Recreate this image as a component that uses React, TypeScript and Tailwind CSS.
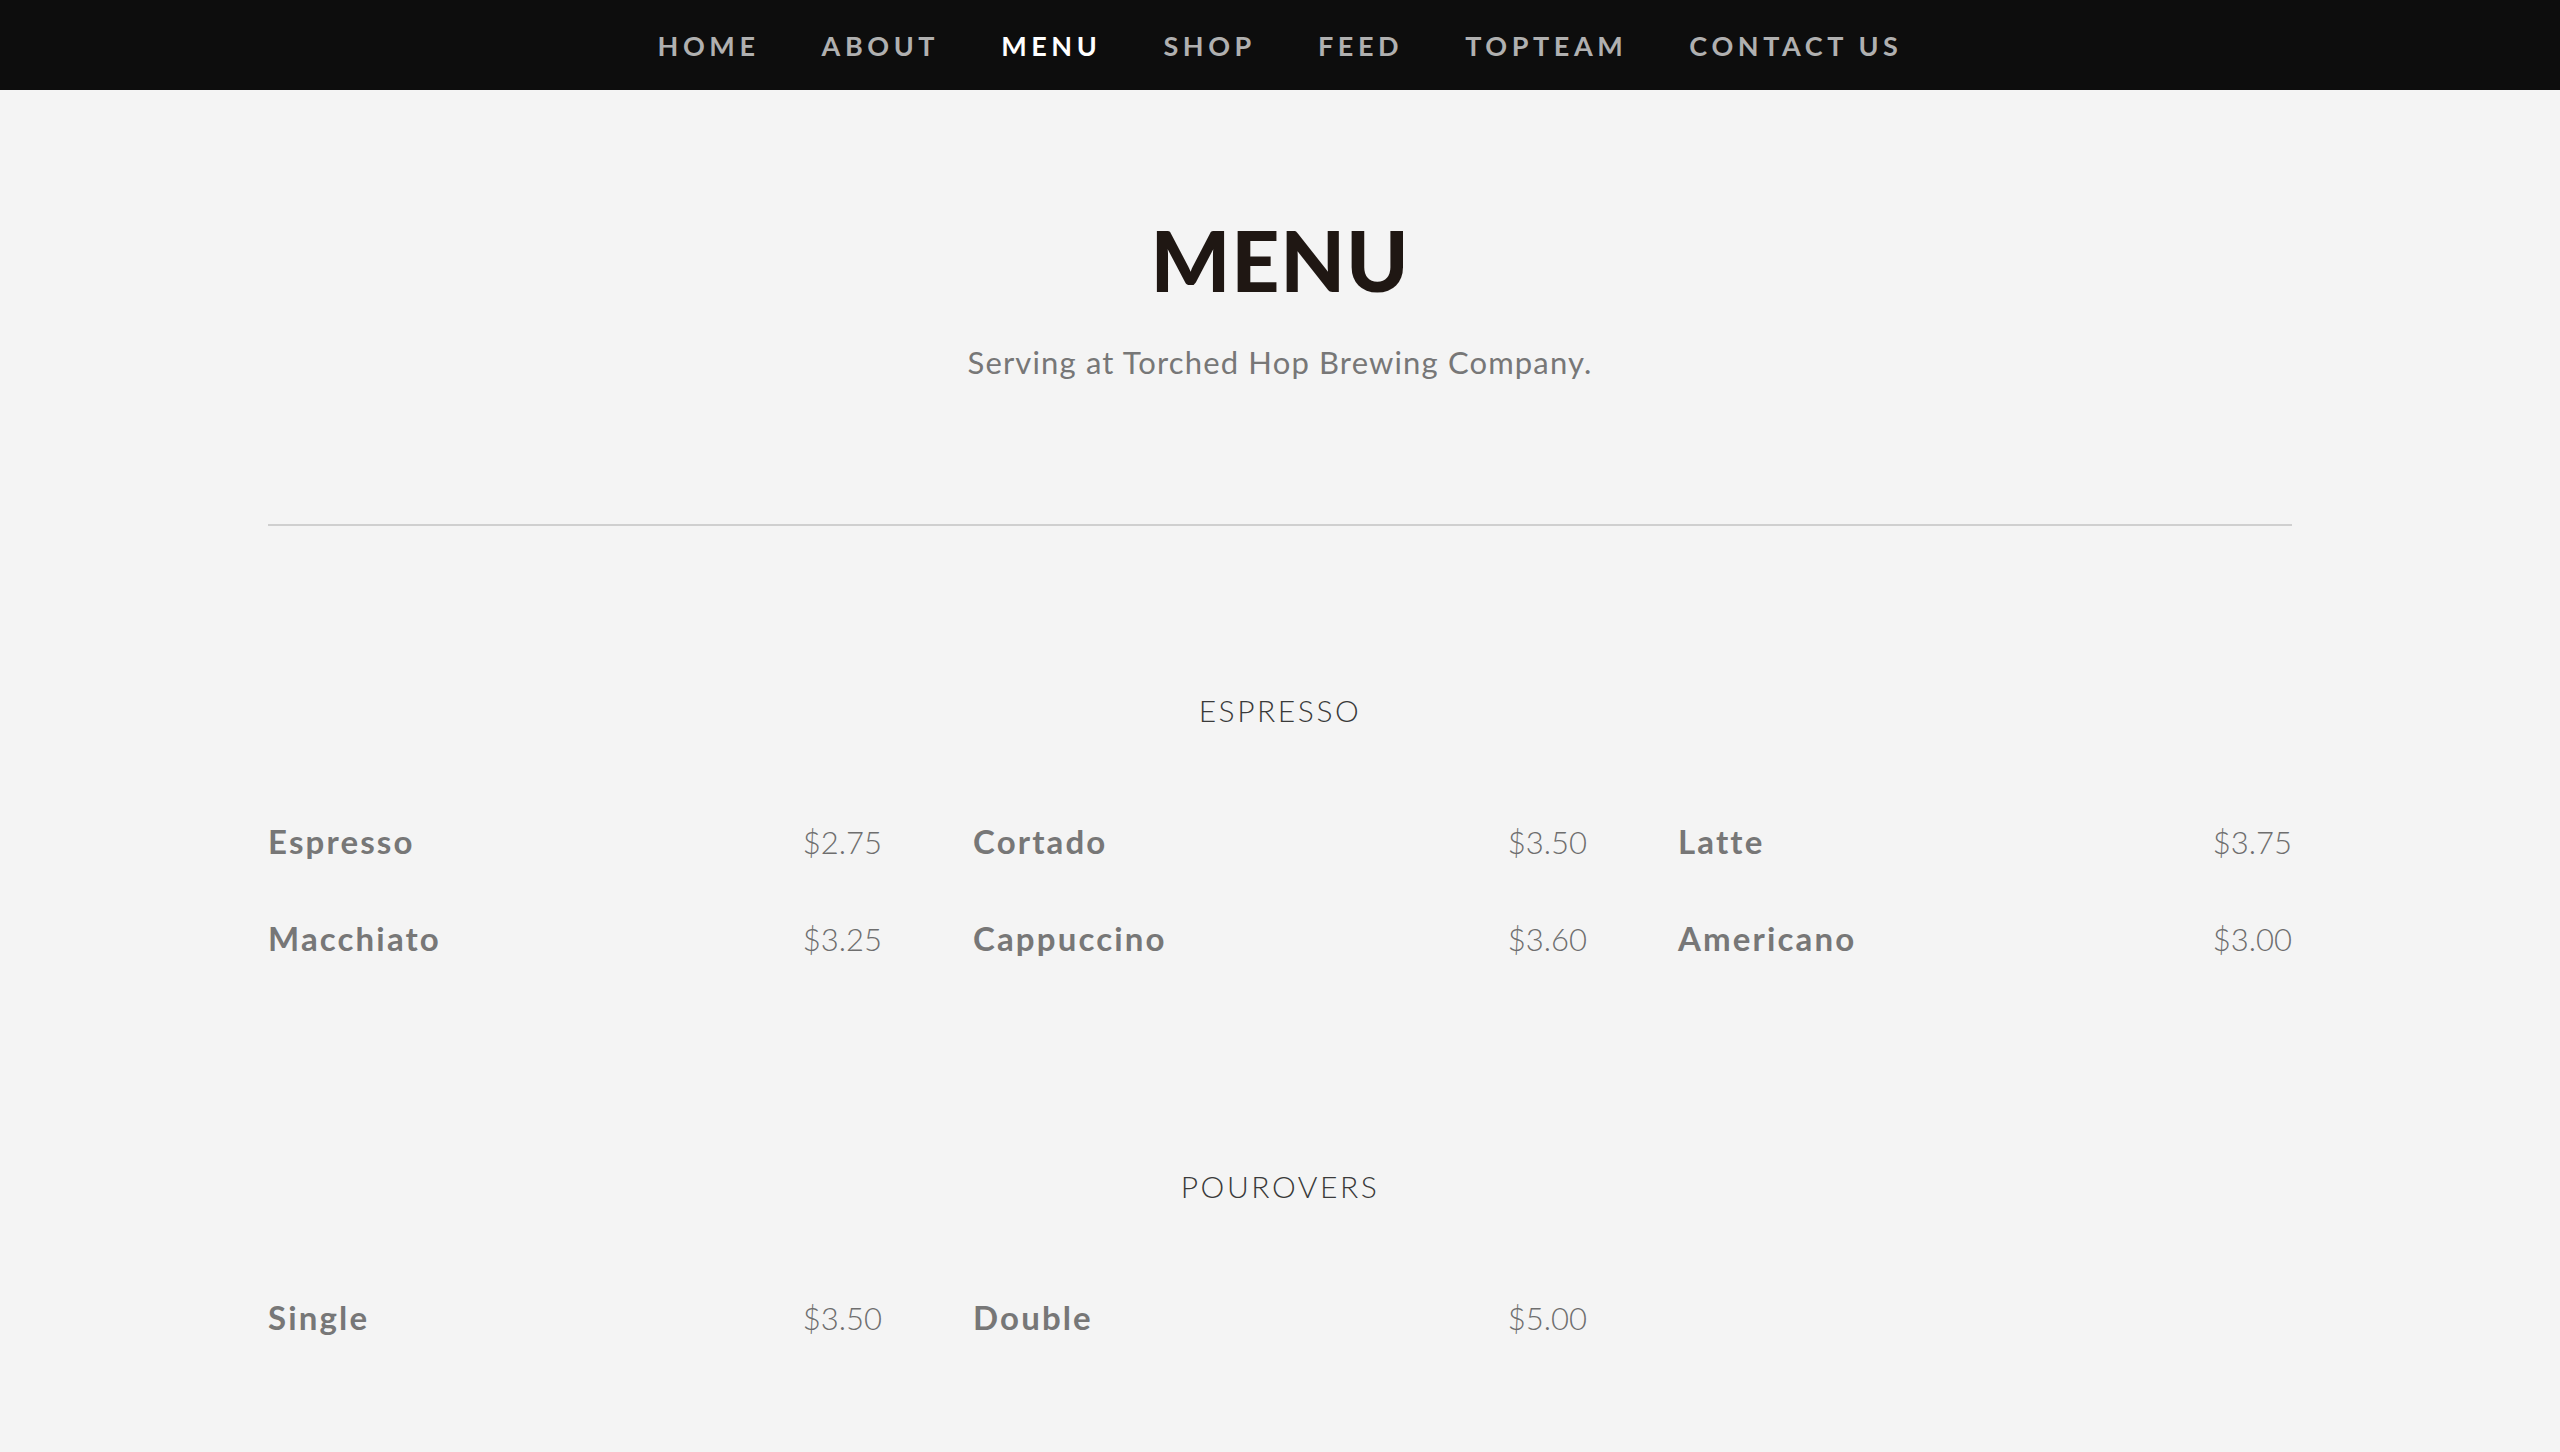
const links = ['HOME', 'ABOUT', 'MENU', 'SHOP', 'FEED', 'TOPTEAM', 'CONTACT US']

const sections = [
  {
    title: 'ESPRESSO',
    items: [
      { name: 'Espresso', price: '$2.75' },
      { name: 'Cortado', price: '$3.50' },
      { name: 'Latte', price: '$3.75' },
      { name: 'Macchiato', price: '$3.25' },
      { name: 'Cappuccino', price: '$3.60' },
      { name: 'Americano', price: '$3.00' },
    ],
  },
  {
    title: 'POUROVERS',
    items: [
      { name: 'Single', price: '$3.50' },
      { name: 'Double', price: '$5.00' },
    ],
  },
]

export default function App() {
  return (
    <div className="min-h-screen bg-[#f4f4f4] font-['Lato',sans-serif]">
      <nav className="h-[90px] bg-[#0d0d0d] flex items-center justify-center gap-[62px]">
        {links.map((link) => (
          <a
            key={link}
            href="#"
            className={`text-[27px] leading-none font-bold tracking-[0.17em] ${
              link === 'MENU' ? 'text-white' : 'text-[#b0b0b0]'
            }`}
          >
            {link}
          </a>
        ))}
      </nav>

      <header className="pt-[128px] text-center">
        <h1 className="text-[84px] leading-none font-black text-[#1f1713] tracking-[0.01em]">MENU</h1>
        <p className="mt-[45px] text-[31px] leading-none text-[#777] tracking-[0.037em]">
          Serving at Torched Hop Brewing Company.
        </p>
      </header>

      <main className="w-[2024px] mx-auto">
        <hr className="mt-[146px] border-0 border-t-2 border-[#cfcfcf]" />

        <div className="pt-[169px] pb-[100px] flex flex-col gap-[216px]">
          {sections.map((section) => (
            <section key={section.title}>
              <h2 className="text-center text-[30px] leading-none font-light text-[#3a3a3a] tracking-[0.085em]">
                {section.title}
              </h2>
              <div className="mt-[100px] grid grid-cols-3 gap-x-[91px] gap-y-[64px]">
                {section.items.map((item) => (
                  <div key={item.name} className="flex items-baseline justify-between">
                    <span className="text-[33px] leading-none font-bold text-[#777] tracking-[0.065em]">
                      {item.name}
                    </span>
                    <span className="text-[31px] leading-none font-light text-[#6e6e6e]">{item.price}</span>
                  </div>
                ))}
              </div>
            </section>
          ))}
        </div>
      </main>
    </div>
  )
}
